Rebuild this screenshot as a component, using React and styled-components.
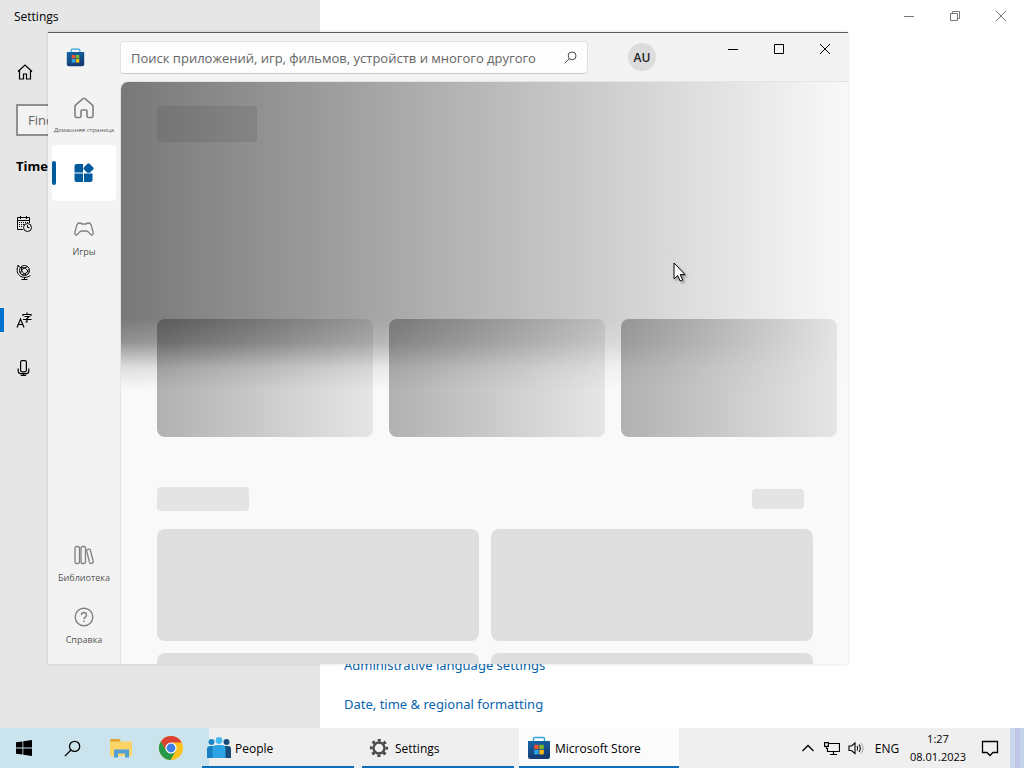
import React from "react";
import styled, { createGlobalStyle } from "styled-components";

const GlobalStyle = createGlobalStyle`
  * {
    box-sizing: border-box;
  }

  body {
    margin: 0;
    font-family: "Open Sans", "Noto Sans", sans-serif;
    font-size: 12px;
    color: #000;
  }

  button {
    display: flex;
    align-items: center;
    justify-content: center;
    margin: 0;
    padding: 0;
    border: none;
    background: none;
    font: inherit;
    color: inherit;
  }

  svg {
    display: block;
    flex: none;
  }
`;

const Desktop = styled.div`
  position: relative;
  display: flex;
  flex-direction: column;
  height: 100vh;
  overflow: hidden;
  background: #fff;
`;

// Settings window
const SettingsWindow = styled.section`
  flex: 1;
  min-height: 0;
  display: flex;
`;

const SettingsSidebar = styled.aside`
  flex: 0 0 320px;
  display: flex;
  flex-direction: column;
  background: #e6e6e6;
`;

const SettingsTitle = styled.h1`
  margin: 0;
  padding: 1px 14px 0;
  font-size: 12px;
  font-weight: 400;
  line-height: 32px;
`;

const SettingsHome = styled.button`
  width: 50px;
  height: 48px;
  margin: 15px 0 8px;
`;

const SettingsSearch = styled.input`
  height: 32px;
  margin: 0 16px;
  padding: 0 10px;
  border: 2px solid #8f8f8f;
  background: #f2f2f2;
  font: inherit;
  font-size: 13px;

  &::placeholder {
    color: #666;
    opacity: 1;
  }
`;

const SettingsHeading = styled.h2`
  margin: 20px 0 24px;
  padding: 0 16px;
  font-size: 13px;
  font-weight: 700;
  line-height: 20px;
`;

const SettingsLink = styled.button`
  width: 100%;
  height: 48px;
  justify-content: flex-start;
  gap: 16px;

  &::before {
    content: "";
    width: 4px;
    height: 24px;
    margin-right: -4px;
    background: ${(p) => (p.$active ? "#0073d0" : "transparent")};
  }
`;

const SettingsMain = styled.main`
  flex: 1;
  display: flex;
  flex-direction: column;
  justify-content: space-between;
  padding: 0 0 14px 24px;
`;

const Caption = styled.div`
  display: flex;
  margin-left: auto;
  color: ${(p) => (p.$muted ? "#777" : "#000")};

  button {
    width: 46px;
    height: 32px;
  }
`;

const RelatedLinks = styled.nav`
  display: flex;
  flex-direction: column;
  align-items: flex-start;
  gap: 19px;

  a {
    font-family: "Noto Sans", sans-serif;
    font-size: 13px;
    line-height: 20px;
    color: #0a64ad;
    text-decoration: none;
  }
`;

// Store window
const StoreWindow = styled.section`
  position: absolute;
  top: 32px;
  left: 48px;
  width: 800px;
  height: 632px;
  display: flex;
  flex-direction: column;
  border-top: 1px solid #5c5c5c;
  background: #f3f3f3;
  box-shadow: 0 0 3px rgba(0, 0, 0, 0.14);
`;

const StoreHeader = styled.header`
  display: flex;
  align-items: flex-start;
  height: 48px;
`;

const StoreLogo = styled.div`
  flex: 0 0 72px;
  padding: 15px 0 0 18px;
`;

const StoreSearch = styled.div`
  flex: 0 1 468px;
  display: flex;
  align-items: center;
  height: 33px;
  margin-top: 8px;
  padding: 0 10px;
  border: 1px solid #e2e2e2;
  border-bottom-color: #ccc;
  border-radius: 4px;
  background: #fdfdfd;
  color: #444;

  input {
    flex: 1;
    min-width: 0;
    padding: 0;
    border: none;
    outline: none;
    background: none;
    font: inherit;
    font-size: 13px;
  }

  input::placeholder {
    color: #666;
    opacity: 1;
  }
`;

const Avatar = styled.button`
  width: 28px;
  height: 28px;
  margin: 10px 0 0 40px;
  border-radius: 50%;
  background: #dcdcdc;
  font-size: 12px;
  font-weight: 600;
  color: #222;
`;

const StoreBody = styled.div`
  flex: 1;
  min-height: 0;
  display: flex;
`;

const Rail = styled.nav`
  flex: 0 0 72px;
  display: flex;
  flex-direction: column;
  justify-content: space-between;
  padding: 4px 4px 15px;
`;

const RailGroup = styled.div`
  display: flex;
  flex-direction: column;
  gap: ${(p) => p.$gap}px;
`;

const RailItem = styled.button`
  position: relative;
  height: 56px;
  flex-direction: column;
  gap: ${(p) => (p.$small ? 4 : 6)}px;
  padding-top: ${(p) => (p.$active ? 0 : p.$small ? 8 : 11)}px;
  border-radius: 4px;
  background: ${(p) => (p.$active ? "#fff" : "none")};
  color: ${(p) => (p.$active ? "#005a9e" : "#808080")};

  span {
    font-size: ${(p) => (p.$small ? 6 : 9)}px;
    line-height: 14px;
    white-space: nowrap;
    color: #555;
  }

  &::before {
    content: "";
    position: absolute;
    left: 0;
    top: 16px;
    width: 4px;
    height: 24px;
    border-radius: 2px;
    background: ${(p) => (p.$active ? "#005a9e" : "transparent")};
  }
`;

const StoreContent = styled.main`
  flex: 1;
  min-width: 0;
  overflow: hidden;
  border: solid #e4e4e4;
  border-width: 1px 0 0 1px;
  border-top-left-radius: 8px;
  background: #f9f9f9;
`;

const Hero = styled.div`
  display: flex;
  flex-direction: column;
  justify-content: space-between;
  height: 355px;
  padding: 24px 0 0 36px;
  background:
    linear-gradient(
      to bottom,
      rgba(249, 249, 249, 0) 236px,
      rgba(249, 249, 249, 0.2) 260px,
      rgba(249, 249, 249, 0.8) 286px,
      #f9f9f9 308px
    ),
    linear-gradient(to right, #787878, #f9f9f9);
`;

const HeroTitle = styled.div`
  width: 100px;
  height: 36px;
  border-radius: 4px;
  background: rgba(0, 0, 0, 0.08);
`;

const HeroCards = styled.div`
  display: flex;
  gap: 16px;
`;

const HeroCard = styled.div`
  flex: 0 0 216px;
  height: 118px;
  border-radius: 8px;
  background: linear-gradient(to right, rgba(0, 0, 0, 0.29), rgba(0, 0, 0, 0.08));
`;

const ShelfHeader = styled.div`
  display: flex;
  align-items: center;
  justify-content: space-between;
  margin: 50px 44px 18px 36px;
`;

const Placeholder = styled.div`
  width: ${(p) => p.$width}px;
  height: ${(p) => p.$height}px;
  border-radius: 4px;
  background: #e4e4e4;
`;

const Shelf = styled.div`
  display: grid;
  grid-template-columns: 1fr 1fr;
  gap: 12px;
  margin: 0 35px 0 36px;
`;

const Tile = styled.div`
  height: 112px;
  border-radius: 8px;
  background: #dedede;
`;

// Taskbar
const Taskbar = styled.footer`
  flex: 0 0 40px;
  display: flex;
  background: linear-gradient(to right, #cbe3ed 209px, #efefef 209px);
`;

const QuickLaunch = styled.div`
  flex: 0 0 199px;
  display: flex;
`;

const QuickButton = styled.button`
  width: ${(p) => (p.$app ? 50 : 48)}px;
`;

const Task = styled.button`
  position: relative;
  flex: 0 1 160px;
  justify-content: flex-start;
  gap: 4px;
  padding-left: 8px;
  background: ${(p) => (p.$active ? "#fbfbfb" : "none")};

  &::after {
    content: "";
    position: absolute;
    left: ${(p) => (p.$active ? 0 : 3)}px;
    right: ${(p) => (p.$active ? 0 : 5)}px;
    bottom: 0;
    height: 2px;
    background: #0c6fbd;
  }
`;

const Tray = styled.div`
  display: flex;
  align-items: center;
  margin-left: auto;

  button {
    width: 24px;
    height: 40px;
  }
`;

const Language = styled.button`
  && {
    width: 38px;
  }
`;

const Clock = styled.div`
  width: 64px;
  font-size: 11px;
  line-height: 18px;
  text-align: center;
`;

const Notifications = styled.button`
  && {
    width: 40px;
  }
`;

const ShowDesktop = styled.button`
  && {
    width: 14px;
    border-right: 4px solid #c4d5ea;
    border-left: 5px solid #c9d6e8;
    background: #c3c5e6;
  }
`;

const Cursor = styled.svg`
  position: absolute;
  left: 673px;
  top: 262px;
  filter: drop-shadow(2px 2px 1px rgba(0, 0, 0, 0.3));
`;

const Line = ({ size = 16, width = 1, box = 16, children, ...rest }) => (
  <svg
    width={size}
    height={size}
    viewBox={`0 0 ${box} ${box}`}
    fill="none"
    stroke="currentColor"
    strokeWidth={width}
    aria-hidden="true"
    {...rest}
  >
    {children}
  </svg>
);

const CaptionButtons = ({ muted, restored }) => (
  <Caption $muted={muted}>
    <button type="button" aria-label="Minimize">
      <Line size={12} box={12}><path d="M1 6.5h10" /></Line>
    </button>
    <button type="button" aria-label={restored ? "Maximize" : "Restore"}>
      <Line size={12} box={12}>
        {restored ? (
          <path d="M1.5 1.5h9v9h-9z" />
        ) : (
          <path d="M1.5 3.5h7v7h-7zM3.5 3.5v-2h7v7h-2" />
        )}
      </Line>
    </button>
    <button type="button" aria-label="Close">
      <Line size={12} box={12}><path d="M1 1l10 10M11 1L1 11" /></Line>
    </button>
  </Caption>
);

const CalendarIcon = () => (
  <Line>
    <path d="M7 13.5H1.5v-12h12V7M1.5 4.5h12M4.5 0v3M10.5 0v3" />
    <path d="M3 6.5h9M3 8.5h5M3 10.5h4" strokeDasharray="1 1" />
    <circle cx="11.5" cy="11.5" r="4" fill="#e6e6e6" />
    <path d="M11.5 9v2.5h2" />
  </Line>
);

const GlobeIcon = () => (
  <Line>
    <circle cx="8.5" cy="6.5" r="5" />
    <path d="M5 3.5q5.500-.5 7.500 5M4.500 9.500Q5 4.500 11 3M5.500 4q-.5 5 5 7M12.500 5.500Q11.500 10 6.500 10.500" />
    <path d="M2.500 1C.5 4 .5 9 3.500 11.500s7.500 2.500 11 0M1.500 1.500l3 2M8.500 13v2.500M5.500 15.500h6" />
  </Line>
);

const LanguageIcon = () => (
  <Line width={1.2}>
    <path d="M1 15.500L4.500 7 8 15.500M2.200 12.500h4.600" />
    <path d="M7 4V2.500h8V4M11 .5v2M8.500 4.500h4.500l-2 2v3.500H9.500M7 7.500h8.500" />
  </Line>
);

const MicIcon = () => (
  <Line width={1.2}>
    <rect x="4.600" y="0.600" width="5.800" height="11.200" rx="1.500" />
    <path d="M2.200 8.500V11q0 2.700 2.600 2.700h5.400q2.600 0 2.600-2.700V8.500M7.500 13.500v2M4.800 15.400h5.400" />
  </Line>
);

const StoreIcon = ({ size }) => (
  <svg width={size} height={size} viewBox="0 0 24 24" aria-hidden="true">
    <defs>
      <linearGradient id="bag" x1="0" y1="0" x2="0.300" y2="1">
        <stop offset="0" stopColor="#1368a8" />
        <stop offset="1" stopColor="#163b72" />
      </linearGradient>
    </defs>
    <path d="M6.500 7V2.800q0-1.300 1.300-1.300h8.400q1.300 0 1.300 1.300V7" fill="none" stroke="#35a4d8" strokeWidth="1.500" />
    <path d="M1 5h22v15.500q0 2.500-2.500 2.500h-17Q1 23 1 20.500z" fill="url(#bag)" />
    <path d="M7.200 8.800h4.400v4.400H7.200z" fill="#f0522b" />
    <path d="M12.400 8.800h4.400v4.400h-4.400z" fill="#80b928" />
    <path d="M7.200 14h4.400v4.400H7.200z" fill="#2aa6e8" />
    <path d="M12.400 14h4.400v4.400h-4.400z" fill="#fbba16" />
  </svg>
);

const HomeIcon = () => (
  <Line size={22} box={22} width={1.6}>
    <path d="M2 9.500Q2 8.500 2.800 7.800L10 1.600q1-.8 2 0l7.200 6.200q.8.7.8 1.700v9.500q0 1.500-1.500 1.500h-3Q14 20.500 14 19v-5q0-1-1-1H9q-1 0-1 1v5q0 1.500-1.500 1.500h-3Q2 20.500 2 19z" />
  </Line>
);

const AppsIcon = () => (
  <svg width="20" height="20" viewBox="0 0 20 20" fill="currentColor" aria-hidden="true">
    <path d="M2.500 1H9v8.500H.5V3q0-2 2-2zM.5 10.500H9V19H2.500q-2 0-2-2zM10 10.500h8.500V17q0 2-2 2H10z" />
    <path d="M13.700.6q.8-.8 1.600 0l4 4q.8.800 0 1.600l-3.500 3.500h-2.600L9.800 6.200q-.8-.8 0-1.600z" />
  </svg>
);

const GamesIcon = () => (
  <Line size={20} box={20} width={1.3}>
    <path d="M5.500 4Q7 4 8 5h4q1-1 2.500-1 2 0 2.700 2l1.700 6.500q.8 3.500-1 3.500-1.100 0-2.200-1.500Q14 12 12.500 12h-5Q6 12 4.300 14.500 3.200 16 2.100 16q-1.800 0-1-3.500L2.800 6Q3.500 4 5.500 4z" />
  </Line>
);

const LibraryIcon = () => (
  <Line size={20} box={20} width={1.3}>
    <rect x="1" y="1.500" width="4.500" height="17" rx="1.500" />
    <rect x="7" y="1.500" width="4.500" height="17" rx="1.500" />
    <rect x="14" y="4" width="3.800" height="14.500" rx="1.500" transform="rotate(-14 16 11)" />
  </Line>
);

const HelpIcon = () => (
  <Line size={20} box={20} width={1.4}>
    <circle cx="10" cy="10" r="8.800" />
    <path d="M7.500 8q0-2.500 2.500-2.500T12.500 8q0 1.300-1.300 2.200Q10 11 10 12.200M10 13.500v1.400" />
  </Line>
);

const SearchIcon = ({ size }) => (
  <Line size={size} width={1.2}>
    <circle cx="10" cy="6" r="4.800" />
    <path d="M6.600 9.400L.8 15.200" />
  </Line>
);

const WindowsIcon = () => (
  <svg width="16" height="16" viewBox="0 0 16 16" aria-hidden="true">
    <path d="M0 2.300L6.500 1.400v6.200H0zM7.300 1.300L16 0v7.600H7.300zM0 8.400h6.500v6.200L0 13.700zM7.300 8.400H16V16l-8.700-1.300z" />
  </svg>
);

const FolderIcon = () => (
  <svg width="24" height="24" viewBox="0 0 24 24" aria-hidden="true">
    <path d="M1 4q0-1 1-1h8l2 2.500h10q1 0 1 1V19q0 1-1 1H2q-1 0-1-1z" fill="#fbd468" />
    <path d="M1 4q0-1 1-1h8l2 2.500H1z" fill="#dfa52e" />
    <path d="M5 13.500h15V21.500h-4v-4h-7v4H5z" fill="#4f9fd4" />
  </svg>
);

const ChromeIcon = () => (
  <svg width="24" height="24" viewBox="0 0 24 24" aria-hidden="true">
    <circle cx="12" cy="12" r="12" fill="#fcc31e" />
    <path d="M12 6.500h10.670A12 12 0 0 0 1.900 5.500l5.340 9.250z" fill="#dc4132" />
    <path d="M7.240 14.750L1.900 5.500A12 12 0 0 0 11.430 24l5.330-9.250z" fill="#279847" />
    <circle cx="12" cy="12" r="5.600" fill="#fff" />
    <circle cx="12" cy="12" r="4.400" fill="#3d7de4" />
  </svg>
);

const PeopleIcon = () => (
  <svg width="24" height="24" viewBox="0 0 24 24" aria-hidden="true">
    <circle cx="4.500" cy="6" r="3" fill="#1b86c9" />
    <circle cx="19.500" cy="6" r="3" fill="#174f80" />
    <path d="M0 13q0-3 3-3h5v12H0z" fill="#1580c4" />
    <path d="M24 13q0-3-3-3h-5v12h8z" fill="#164b7c" />
    <circle cx="12" cy="4.500" r="3.400" fill="#46b9ef" />
    <path d="M5.500 13q0-4 4-4h5q4 0 4 4v9h-13z" fill="#2ca3e2" />
  </svg>
);

const GearIcon = () => (
  <svg width="24" height="24" viewBox="0 0 24 24" fill="none" stroke="#4a4a4a" aria-hidden="true">
    <circle cx="12" cy="12" r="5.500" strokeWidth="2.400" />
    <circle cx="12" cy="12" r="7.800" strokeWidth="2.600" strokeDasharray="3.060 3.066" strokeDashoffset="1.530" />
  </svg>
);

const settingsLinks = [
  { label: "Date & time", icon: <CalendarIcon /> },
  { label: "Region", icon: <GlobeIcon /> },
  { label: "Language", icon: <LanguageIcon />, active: true },
  { label: "Speech", icon: <MicIcon /> },
];

const tasks = [
  { label: "People", icon: <PeopleIcon /> },
  { label: "Settings", icon: <GearIcon /> },
  { label: "Microsoft Store", icon: <StoreIcon size={24} />, active: true },
];

const Settings = () => (
  <SettingsWindow>
    <SettingsSidebar>
      <SettingsTitle>Settings</SettingsTitle>
      <SettingsHome type="button" aria-label="Home">
        <Line width={1.2}>
          <path d="M1 7.500L8 1l7 6.500M2.500 6.500v8.500h4v-5h3v5h4V6.500" />
        </Line>
      </SettingsHome>
      <SettingsSearch type="text" placeholder="Find a setting" aria-label="Find a setting" />
      <SettingsHeading>Time &amp; Language</SettingsHeading>
      {settingsLinks.map((item) => (
        <SettingsLink key={item.label} type="button" aria-label={item.label} $active={item.active}>
          {item.icon}
        </SettingsLink>
      ))}
    </SettingsSidebar>
    <SettingsMain>
      <CaptionButtons muted />
      <RelatedLinks>
        <a href="#admin">Administrative language settings</a>
        <a href="#region">Date, time &amp; regional formatting</a>
      </RelatedLinks>
    </SettingsMain>
  </SettingsWindow>
);

const Store = () => (
  <StoreWindow>
    <StoreHeader>
      <StoreLogo>
        <StoreIcon size={19} />
      </StoreLogo>
      <StoreSearch>
        <input
          type="text"
          placeholder="Поиск приложений, игр, фильмов, устройств и многого другого"
          aria-label="Поиск"
        />
        <SearchIcon size={13} />
      </StoreSearch>
      <Avatar type="button">AU</Avatar>
      <CaptionButtons restored />
    </StoreHeader>
    <StoreBody>
      <Rail>
        <RailGroup $gap={4}>
          <RailItem type="button" $small>
            <HomeIcon />
            <span>Домашняя страница</span>
          </RailItem>
          <RailItem type="button" aria-label="Приложения" $active>
            <AppsIcon />
          </RailItem>
          <RailItem type="button">
            <GamesIcon />
            <span>Игры</span>
          </RailItem>
        </RailGroup>
        <RailGroup $gap={6}>
          <RailItem type="button">
            <LibraryIcon />
            <span>Библиотека</span>
          </RailItem>
          <RailItem type="button">
            <HelpIcon />
            <span>Справка</span>
          </RailItem>
        </RailGroup>
      </Rail>
      <StoreContent>
        <Hero>
          <HeroTitle />
          <HeroCards>
            <HeroCard />
            <HeroCard />
            <HeroCard />
          </HeroCards>
        </Hero>
        <ShelfHeader>
          <Placeholder $width={92} $height={24} />
          <Placeholder $width={52} $height={20} />
        </ShelfHeader>
        <Shelf>
          <Tile />
          <Tile />
          <Tile />
          <Tile />
        </Shelf>
      </StoreContent>
    </StoreBody>
  </StoreWindow>
);

export default function App() {
  return (
    <Desktop>
      <GlobalStyle />
      <Settings />
      <Store />
      <Taskbar>
        <QuickLaunch>
          <QuickButton type="button" aria-label="Start"><WindowsIcon /></QuickButton>
          <QuickButton type="button" aria-label="Search"><SearchIcon size={17} /></QuickButton>
          <QuickButton type="button" aria-label="File Explorer" $app><FolderIcon /></QuickButton>
          <QuickButton type="button" aria-label="Chrome" $app><ChromeIcon /></QuickButton>
        </QuickLaunch>
        {tasks.map((task) => (
          <Task key={task.label} type="button" $active={task.active}>
            {task.icon}
            {task.label}
          </Task>
        ))}
        <Tray>
          <button type="button" aria-label="Show hidden icons">
            <Line size={14} box={14} width={1.3}><path d="M1.500 10L7 4.500l5.500 5.500" /></Line>
          </button>
          <button type="button" aria-label="Network">
            <Line width={1.2}>
              <path d="M4.500 3.500h11v8H3.500V8M9.500 11.500v3M6 14.500h7M.6 2.600h3.800v3.800H.6zM2.500 6.500V9" />
            </Line>
          </button>
          <button type="button" aria-label="Volume">
            <Line width={1.1}>
              <path d="M1 6v4.500h2.500L7 13.500V3L3.500 6zM9 6q1.500 2.200 0 4.500M11 4.500q2.700 3.700 0 7.500" />
              <path d="M13 3q4 5.200 0 10.500" stroke="#aaa" />
            </Line>
          </button>
          <Language type="button">ENG</Language>
          <Clock>
            1:27
            <br />
            08.01.2023
          </Clock>
          <Notifications type="button" aria-label="Notifications">
            <Line size={18} box={18} width={1.3}>
              <path d="M1.500 2.500h15v11H12l-3 3-3-3H1.500z" />
            </Line>
          </Notifications>
          <ShowDesktop type="button" aria-label="Show desktop" />
        </Tray>
      </Taskbar>
      <Cursor width="14" height="22" viewBox="0 0 14 22" aria-hidden="true">
        <path d="M1 1v16l3.700-3.500L7.200 19l2.500-1.100-2.500-5.300H12z" fill="#fff" stroke="#000" />
      </Cursor>
    </Desktop>
  );
}
